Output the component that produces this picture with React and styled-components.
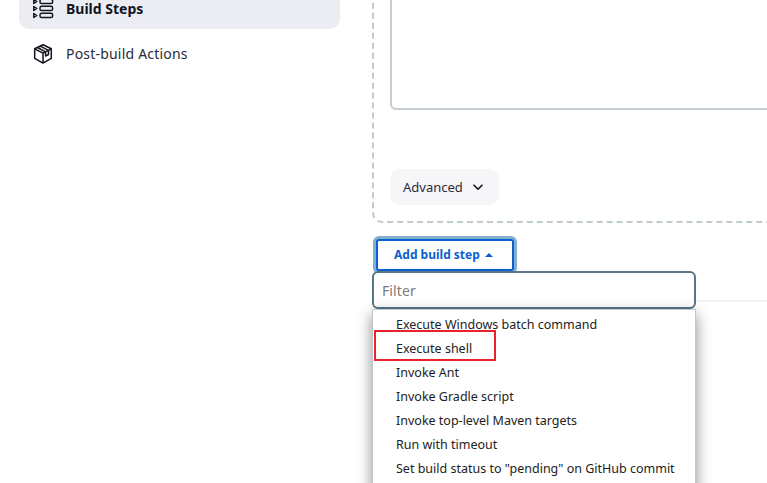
import React from "react";
import styled, { createGlobalStyle } from "styled-components";

const GlobalStyle = createGlobalStyle`
  * { box-sizing: border-box; }
  body { margin: 0; background: #fff; color: #14141f; font-family: "Noto Sans", "Open Sans", sans-serif; overflow: hidden; }
`;

const Page = styled.div`
  display: flex;
  height: 483px;
  overflow: hidden;
`;

const Sidebar = styled.nav`
  flex: none;
  width: 372px;
  padding-left: 19px;
  margin-top: -12px;
  display: flex;
  flex-direction: column;
  gap: 4px;
`;

const NavItem = styled.a`
  display: flex;
  align-items: center;
  gap: 12px;
  width: 321px;
  height: 41px;
  padding-left: 13px;
  border-radius: 10px;
  font-size: 14px;
  line-height: 20px;
  color: ${(p) => (p.$active ? "#14141f" : "#2b2b38")};
  font-weight: ${(p) => (p.$active ? 700 : 400)};
  letter-spacing: ${(p) => p.$track}px;
  background: ${(p) => (p.$active ? "#ecedf3" : "transparent")};
  svg { flex: none; }
`;

const Main = styled.main`
  flex: none;
  width: 460px;
  margin-top: -97px;
  display: flex;
  flex-direction: column;
  align-items: flex-start;
`;

const StepCard = styled.section`
  width: 460px;
  height: 320px;
  padding: 0 16px;
  border: 2px dashed #bfcbd1;
  border-radius: 10px;
  display: flex;
  flex-direction: column;
  align-items: flex-start;
`;

const ScriptArea = styled.div`
  width: 430px;
  height: 205px;
  border: 2px solid #c3cdd2;
  border-radius: 6px;
  background: #fff;
`;

const AdvancedButton = styled.button`
  display: flex;
  align-items: center;
  gap: 9px;
  width: 109px;
  height: 36px;
  margin-top: 59px;
  padding: 0 0 0 13px;
  border: 0;
  border-radius: 10px;
  background: #f6f6f9;
  color: #2b2b38;
  font: 400 13px/18px "Noto Sans", sans-serif;
  letter-spacing: ${(p) => p.$track}px;
`;

const AddStep = styled.div`
  position: relative;
  width: 395px;
  height: 79px;
  padding: 16px 0 0 4px;
  border-bottom: 2px solid #f2f2f7;
`;

const AddButton = styled.button`
  display: flex;
  align-items: center;
  gap: 5px;
  width: 138px;
  height: 32px;
  padding: 0 0 0 16px;
  border: 2px solid #0b60cf;
  border-radius: 3px;
  box-shadow: 0 0 0 3px #83b0cf;
  background: #fff;
  color: #0b60cf;
  font: 700 12px/16px "Noto Sans", sans-serif;
  letter-spacing: ${(p) => p.$track}px;
  white-space: nowrap;
`;

const Dropdown = styled.div`
  position: absolute;
  top: 48px;
  left: 0;
  width: 324px;
`;

const FilterInput = styled.input`
  display: block;
  width: 324px;
  height: 38px;
  padding: 0 8px;
  border: 2px solid #597686;
  border-radius: 6px;
  background: #fff;
  font: 400 14px/20px "Noto Sans", sans-serif;
  letter-spacing: 0.1px;
  &::placeholder { color: #7b7b7b; opacity: 1; }
`;

const Menu = styled.ul`
  position: relative;
  height: 240px;
  margin: 0;
  padding: 3px 0 0;
  list-style: none;
  border: 1px solid #bfcbd1;
  background: #fff;
  box-shadow: 0 5px 14px rgba(0, 0, 0, 0.45);
`;

const MenuItem = styled.li`
  height: 24px;
  padding-left: 23px;
  font-size: 12.5px;
  line-height: 24px;
  color: #222;
  white-space: nowrap;
  letter-spacing: ${(p) => p.$track}px;
`;

const Highlight = styled.span`
  position: absolute;
  left: 1px;
  top: 20px;
  width: 122px;
  height: 31px;
  border: 2px solid #e8232b;
`;

const StepsIcon = () => (
  <svg width="22" height="22" viewBox="0 0 22 22" fill="none" stroke="#14141f" strokeWidth="1.5" strokeLinejoin="round">
    {[3, 10, 17].map((y) => (
      <g key={y}>
        <path d={`M1.8 ${y - 1.5}v4l3-2z`} />
        <rect x="8" y={y - 1.7} width="12.6" height="4.2" rx="1.6" />
      </g>
    ))}
  </svg>
);

const PackageIcon = () => (
  <svg width="22" height="22" viewBox="0 0 22 22" fill="none" stroke="#14141f" strokeWidth="1.5" strokeLinecap="round" strokeLinejoin="round">
    <path d="M11 1.8 19.3 5.8V15.4L11 20.1 2.7 15.4V5.8zM2.7 5.8 11 10.2 19.3 5.8M11 10.2V20.1M5.4 4.5 13.6 8.8V13.1L16.5 11.5V7.3L8.1 3.1" />
  </svg>
);

const menuItems = [
  ["Execute Windows batch command", 0],
  ["Execute shell", 0],
  ["Invoke Ant", 0],
  ["Invoke Gradle script", 0],
  ["Invoke top-level Maven targets", 0],
  ["Run with timeout", 0],
  ['Set build status to "pending" on GitHub commit', 0],
];

export default function App() {
  return (
    <>
      <GlobalStyle />
      <Page>
        <Sidebar>
          <NavItem $active $track={0}><StepsIcon />Build Steps</NavItem>
          <NavItem $track={0.2}><PackageIcon />Post-build Actions</NavItem>
        </Sidebar>
        <Main>
          <StepCard>
            <ScriptArea />
            <AdvancedButton $track={0}>
              Advanced
              <svg width="12" height="12" viewBox="0 0 12 12" fill="none" stroke="#14141f" strokeWidth="1.6" strokeLinecap="round" strokeLinejoin="round"><path d="M2 4.2 6 8.2 10 4.2" /></svg>
            </AdvancedButton>
          </StepCard>
          <AddStep>
            <AddButton $track={0}>
              Add build step
              <svg width="8" height="4" viewBox="0 0 8 4" fill="#0b60cf"><path d="M0 4 4 0 8 4z" /></svg>
            </AddButton>
            <Dropdown>
              <FilterInput placeholder="Filter" />
              <Menu>
                {menuItems.map(([label, track]) => (
                  <MenuItem key={label} $track={track}>{label}</MenuItem>
                ))}
                <Highlight />
              </Menu>
            </Dropdown>
          </AddStep>
        </Main>
      </Page>
    </>
  );
}
